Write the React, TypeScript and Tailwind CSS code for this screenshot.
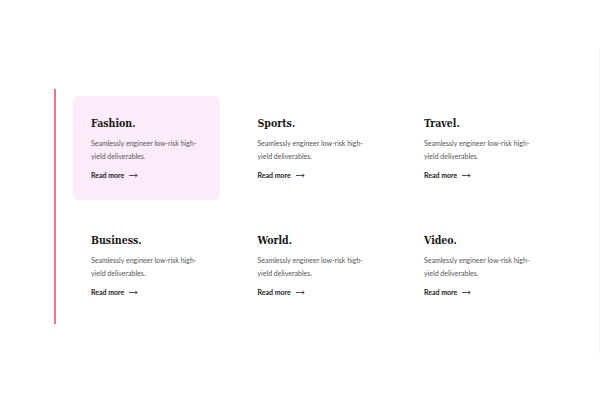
const items = [
  { title: 'Fashion.', active: true },
  { title: 'Sports.' },
  { title: 'Travel.' },
  { title: 'Business.' },
  { title: 'World.' },
  { title: 'Video.' },
]

function Arrow() {
  return (
    <svg width="9" height="5" viewBox="0 0 9 5" fill="none" className="ml-[5px]">
      <path d="M0 2.5H8.2M6.3 1L8.2 2.5L6.3 4" stroke="#222" strokeWidth="0.8" />
    </svg>
  )
}

export default function App() {
  return (
    <div className="w-[600px] h-[400px] bg-white flex overflow-hidden">
      <div className="flex-1 pl-[54px] pt-[89px]">
        <div className="w-fit border-l-2 border-[#ff6f82] pl-[17px] py-[7px]">
          <div className="grid grid-cols-[147px_147px_147px] gap-x-[19.5px] gap-y-[13px]">
            {items.map((it) => (
              <div
                key={it.title}
                className={`h-[104px] rounded-[6px] px-[18px] pt-[21px] ${it.active ? 'bg-[#fcecf9]' : ''}`}
              >
                <h3 className="font-['DejaVu_Serif_Condensed','DejaVu_Serif',serif] [font-stretch:condensed] font-bold text-[10.5px] leading-[13px] text-[#1a1a1a]">
                  {it.title}
                </h3>
                <p className="mt-[7px] font-['Lato',sans-serif] text-[7px] leading-[13px] text-[#555]">
                  Seamlessly engineer low-risk high-
                  <br />
                  yield deliverables.
                </p>
                <a className="mt-[7px] flex items-center font-['Lato',sans-serif] font-bold text-[7px] leading-[10px] text-[#222]">
                  Read more
                  <Arrow />
                </a>
              </div>
            ))}
          </div>
        </div>
      </div>
      <div className="w-px h-[307px] mt-[47px] bg-[#f3f3f3]" />
    </div>
  )
}
